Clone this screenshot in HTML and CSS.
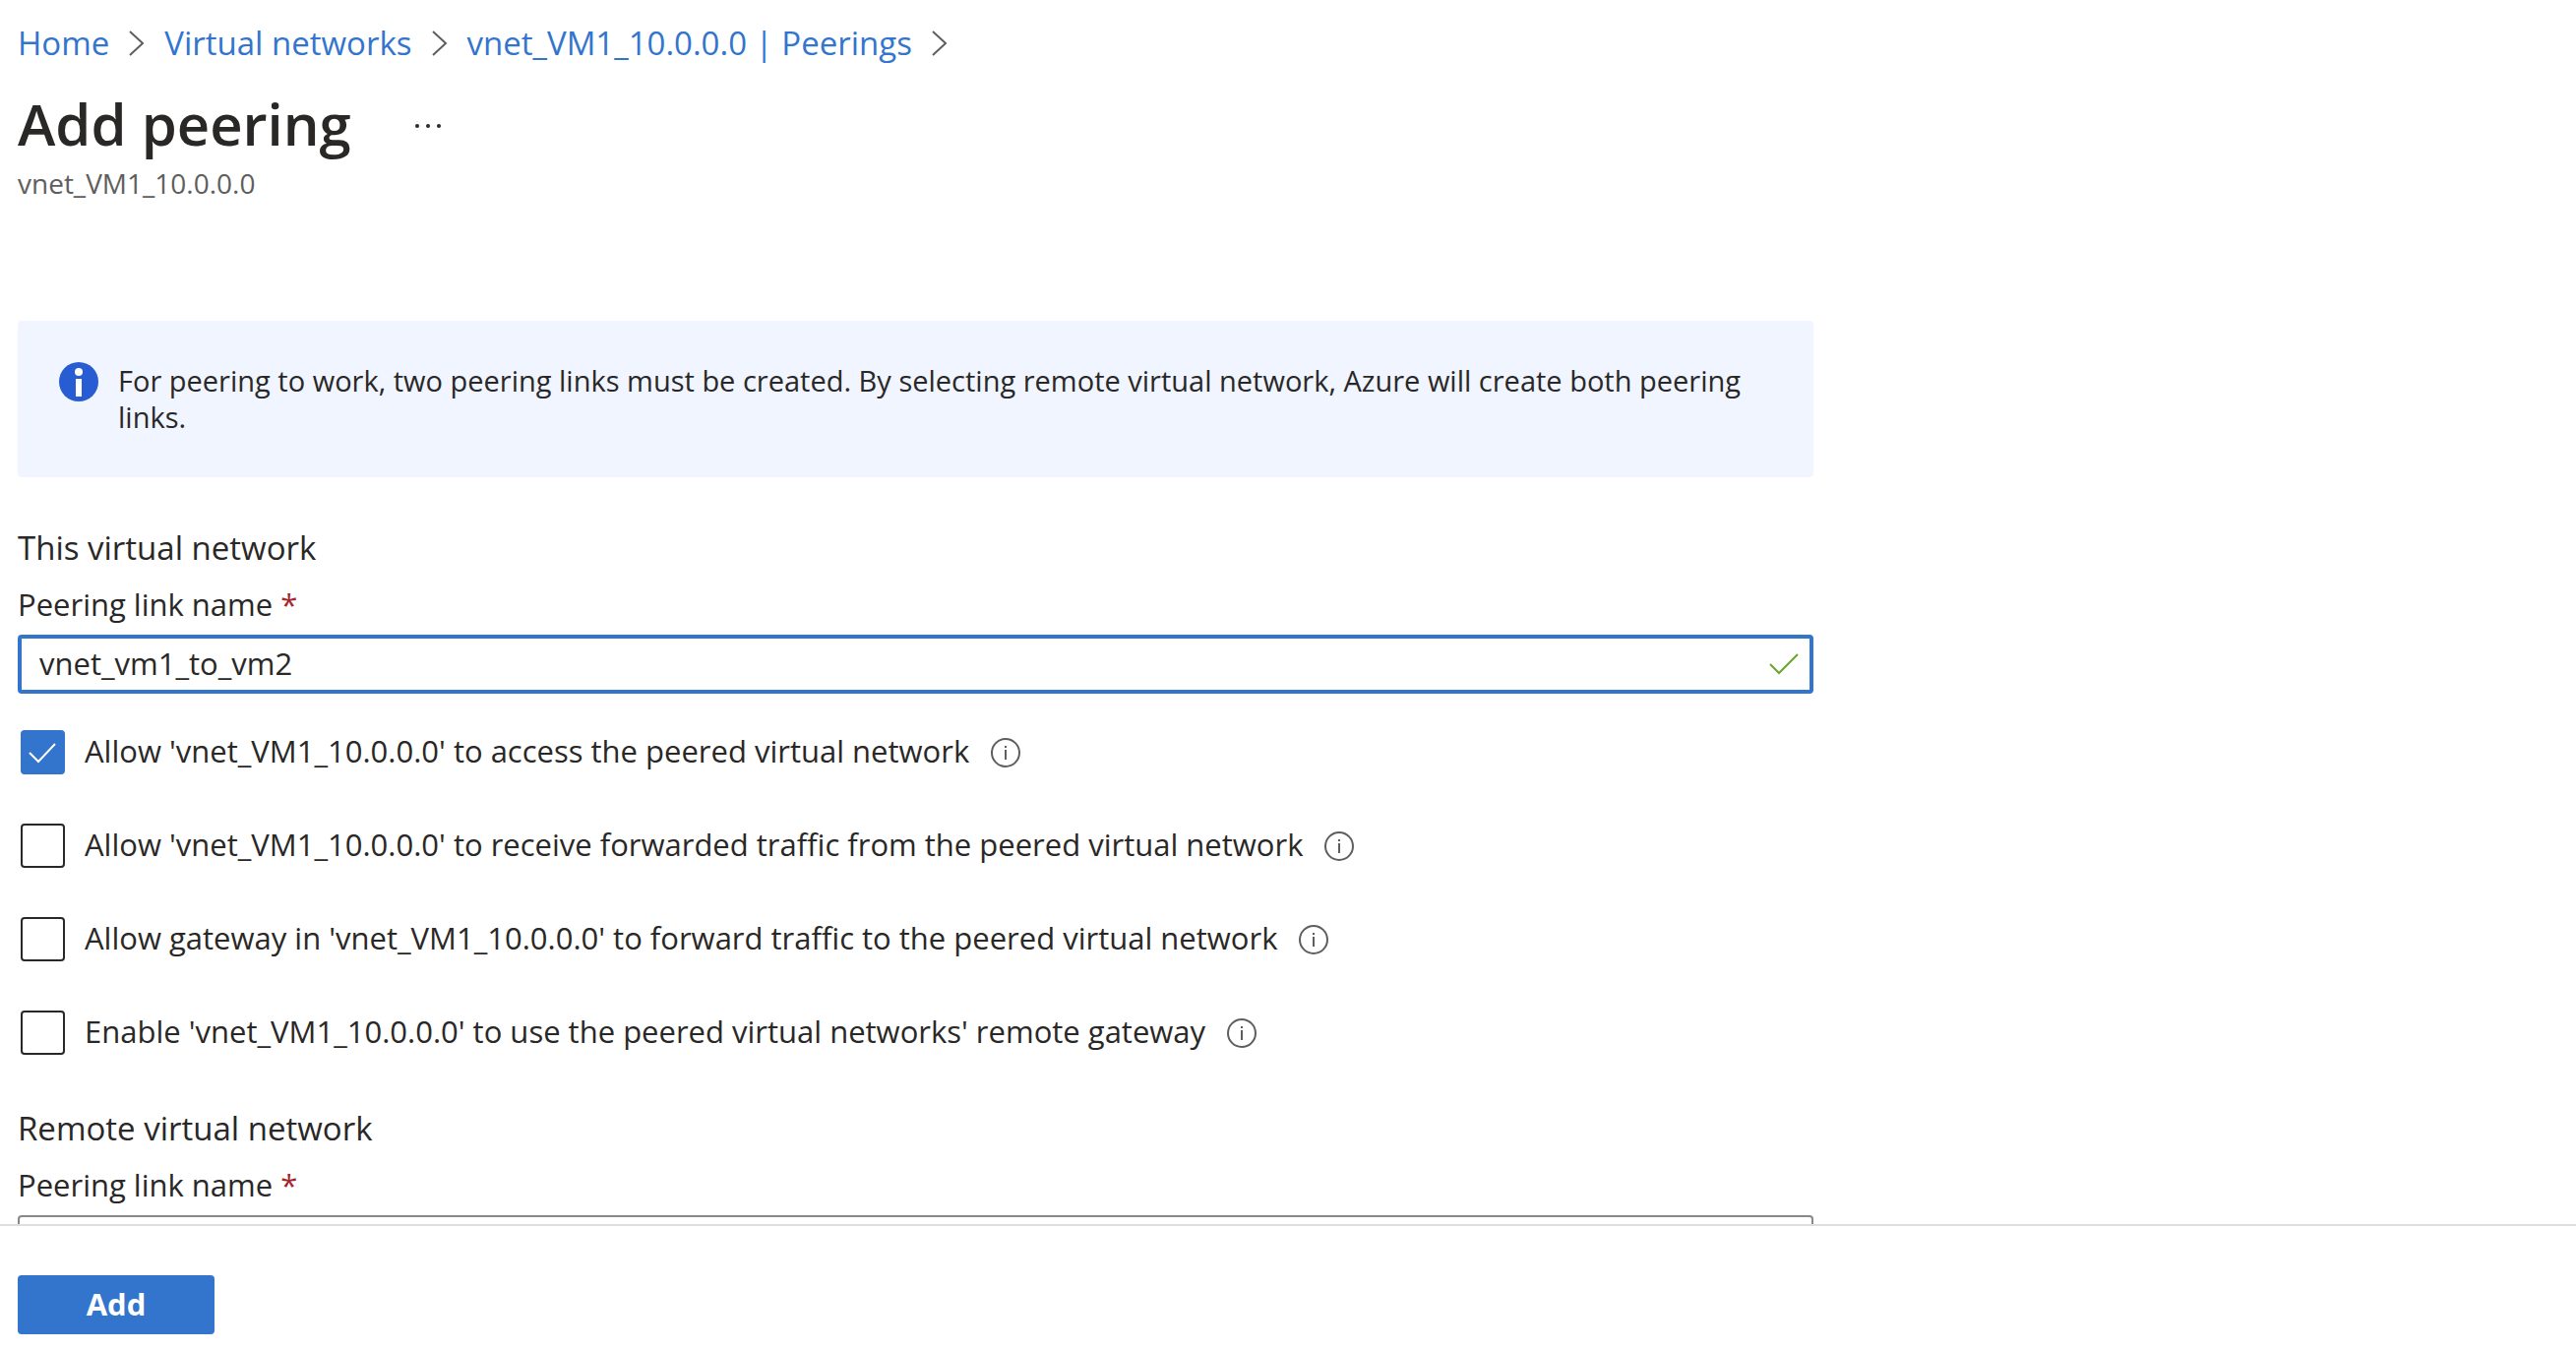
FILE: index.html
```html
<!DOCTYPE html>
<html lang="en">
<head>
<meta charset="utf-8">
<title>Add peering</title>
<meta name="viewport" content="width=device-width, initial-scale=1">
<link rel="stylesheet" href="styles.css">
</head>
<body>
<svg class="sprite" aria-hidden="true">
  <symbol id="chevron" viewBox="0 0 16 26"><path d="M1 1l13 12L1 25" fill="none" stroke="#605e5c" stroke-width="2"/></symbol>
  <symbol id="info" viewBox="0 0 30 30"><circle cx="15" cy="15" r="14" fill="none" stroke="#605e5c" stroke-width="2"/><path d="M15 8v2M15 12v10" fill="none" stroke="#605e5c" stroke-width="2"/></symbol>
</svg>
<main class="blade">
  <nav class="breadcrumb" aria-label="Breadcrumb">
    <a href="#">Home</a>
    <svg class="chevron"><use href="#chevron"/></svg>
    <a href="#">Virtual networks</a>
    <svg class="chevron"><use href="#chevron"/></svg>
    <a href="#">vnet_VM1_10.0.0.0 | Peerings</a>
    <svg class="chevron"><use href="#chevron"/></svg>
  </nav>
  <header class="title">
    <h1>Add peering</h1>
    <button class="more" type="button" aria-label="More actions"><svg viewBox="0 0 28 4" width="28" height="4"><circle cx="3" cy="2" r="2" fill="#292827"/><circle cx="14" cy="2" r="2" fill="#292827"/><circle cx="25" cy="2" r="2" fill="#292827"/></svg></button>
  </header>
  <p class="subtitle">vnet_VM1_10.0.0.0</p>

  <form class="form" id="peering">
    <div class="banner" role="note">
      <svg class="banner-icon" viewBox="0 0 40 40"><circle cx="20" cy="20" r="20" fill="#275cd3"/><circle cx="20" cy="10" r="4" fill="#fff"/><path d="M17 17h6v18h-6z" fill="#fff"/></svg>
      <p>For peering to work, two peering links must be created. By selecting remote virtual network, Azure will create both peering links.</p>
    </div>

    <section>
      <h2>This virtual network</h2>
      <label class="field-label" for="local-name">Peering link name <span class="required">*</span></label>
      <div class="field focused">
        <input id="local-name" type="text" value="vnet_vm1_to_vm2" required>
        <svg class="valid" viewBox="0 0 30 22"><path d="M1 11l9 9L29 1" fill="none" stroke="#69a52b" stroke-width="2"/></svg>
      </div>
      <ul class="options">
        <li><input type="checkbox" id="access" checked><label for="access">Allow 'vnet_VM1_10.0.0.0' to access the peered virtual network</label><svg class="info"><use href="#info"/></svg></li>
        <li><input type="checkbox" id="receive"><label for="receive">Allow 'vnet_VM1_10.0.0.0' to receive forwarded traffic from the peered virtual network</label><svg class="info"><use href="#info"/></svg></li>
        <li><input type="checkbox" id="forward"><label for="forward">Allow gateway in 'vnet_VM1_10.0.0.0' to forward traffic to the peered virtual network</label><svg class="info"><use href="#info"/></svg></li>
        <li><input type="checkbox" id="remote-gateway"><label for="remote-gateway">Enable 'vnet_VM1_10.0.0.0' to use the peered virtual networks' remote gateway</label><svg class="info"><use href="#info"/></svg></li>
      </ul>
    </section>

    <section>
      <h2>Remote virtual network</h2>
      <label class="field-label" for="remote-name">Peering link name <span class="required">*</span></label>
      <div class="field">
        <input id="remote-name" type="text" required>
      </div>
    </section>
  </form>
</main>
<footer class="actions">
  <button class="primary" type="submit" form="peering">Add</button>
</footer>
</body>
</html>
```
FILE: styles.css
```css
* { box-sizing: border-box; }

body {
  margin: 0;
  height: 100vh;
  display: flex;
  flex-direction: column;
  background: #fff;
  color: #292827;
  font: 31px/44px "Segoe UI", "Open Sans", "Noto Sans", sans-serif;
}

h1, h2, p, ul { margin: 0; padding: 0; font-weight: 400; }
svg { flex: none; }
.sprite { display: none; }

.blade {
  flex: 1;
  min-height: 0;
  overflow: hidden;
  padding: 20px 18px 0;
}

.breadcrumb {
  display: flex;
  align-items: center;
  gap: 20px;
  font-size: 33px;
  line-height: 48px;
}
.breadcrumb a { color: #3375cd; text-decoration: none; }
.chevron { width: 16px; height: 26px; }

.title {
  display: flex;
  align-items: center;
  gap: 64px;
  margin-top: 18px;
}
.title h1 { font-size: 58px; line-height: 80px; font-weight: 600; }
.more {
  display: flex;
  padding: 4px 0 0;
  border: 0;
  background: none;
}

.subtitle { font-size: 28px; line-height: 40px; color: #605e5c; }

.form { max-width: 1825px; margin-top: 120px; }

.banner {
  display: flex;
  gap: 20px;
  padding: 42px 42px 43px;
  border-radius: 4px;
  background: #f0f5ff;
  font-size: 29px;
  line-height: 37px;
}
.banner-icon { width: 40px; height: 40px; }

h2 { font-size: 33px; line-height: 48px; margin-top: 48px; }
.field-label { display: block; margin-top: 11px; }
.required { color: #a4262c; }

.field {
  display: flex;
  align-items: center;
  height: 60px;
  margin-top: 9px;
  padding: 0 11px 0 18px;
  border: 2px solid #8a8886;
  border-radius: 4px;
}
.focused { border: 4px solid #3375cd; }
.field input {
  flex: 1;
  min-width: 0;
  padding: 0 0 2px;
  border: 0;
  outline: 0;
  color: inherit;
  background: none;
  font: inherit;
}
.valid { width: 30px; height: 22px; }

.options {
  display: grid;
  gap: 50px;
  margin: 37px 0 51px;
  padding-left: 3px;
  list-style: none;
}
.options li { display: flex; align-items: center; height: 45px; }
.options label { margin: 0 22px 0 20px; padding-bottom: 3px; }
.options input {
  appearance: none;
  flex: none;
  width: 45px;
  height: 45px;
  margin: 0;
  border: 2px solid #292827;
  border-radius: 4px;
}
.options input:checked {
  border-color: #3375cd;
  background: #3375cd url("data:image/svg+xml,%3Csvg xmlns='http://www.w3.org/2000/svg' viewBox='0 0 41 41'%3E%3Cpath d='M7 21l9 9L33 12' fill='none' stroke='%23fff' stroke-width='2'/%3E%3C/svg%3E") center / 41px 41px no-repeat;
}
.info { width: 30px; height: 30px; }

.actions {
  flex: none;
  padding: 50px 18px 16px;
  border-top: 2px solid #dedede;
}
.primary {
  width: 200px;
  height: 60px;
  padding: 0 0 3px;
  border: 0;
  border-radius: 4px;
  background: #3375cd;
  color: #fff;
  font: 700 31px/44px "Segoe UI", "Open Sans", "Noto Sans", sans-serif;
}
```
